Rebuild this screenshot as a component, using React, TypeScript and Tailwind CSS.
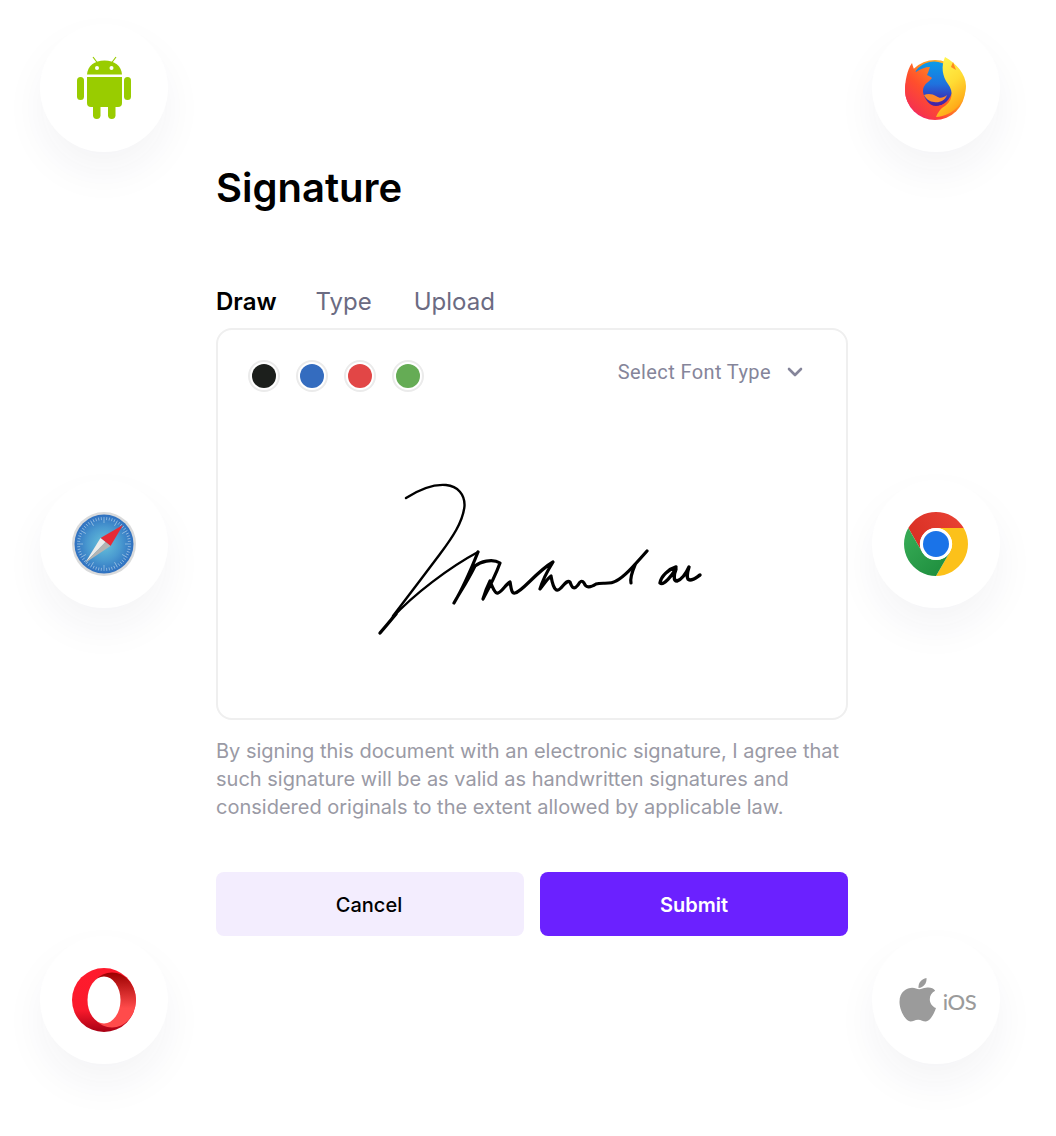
const colors = ["bg-[#1c1f1c]", "bg-[#346cbf]", "bg-[#e24646]", "bg-[#65ac55]"];

function Badge({ children }: { children: React.ReactNode }) {
  return (
    <div className="w-[128px] h-[128px] rounded-full bg-white shadow-[0_20px_40px_rgba(30,40,80,0.05)] flex items-center justify-center">
      {children}
    </div>
  );
}

function Android() {
  return (
    <svg width="128" height="128" viewBox="0 0 128 128" fill="#99cc00">
      <path d="M47 50.5C47.5 42 54.5 36.5 64.5 36.5S81.5 42 82 50.5Z" />
      <path d="M53 33l4.5 6M76 33l-4.5 6" stroke="#99cc00" strokeWidth="1.2" />
      <circle cx="57" cy="44" r="2" fill="#fff" />
      <circle cx="71.5" cy="44" r="2" fill="#fff" />
      <path d="M47 53h35v26a4 4 0 0 1-4 4H51a4 4 0 0 1-4-4Z" />
      <rect x="37" y="53" width="7" height="23" rx="3.5" />
      <rect x="84" y="53" width="7" height="23" rx="3.5" />
      <rect x="53" y="78" width="7.500" height="17" rx="3.700" />
      <rect x="68" y="78" width="7.500" height="17" rx="3.700" />
    </svg>
  );
}

function Firefox() {
  return (
    <svg width="128" height="128" viewBox="0 0 128 128">
      <defs>
        <linearGradient id="ffBase" x1="0.1" y1="0.9" x2="0.9" y2="0.2">
          <stop offset="0" stopColor="#f0226f" />
          <stop offset="0.3" stopColor="#ff3f3a" />
          <stop offset="0.6" stopColor="#ff8a1f" />
          <stop offset="1" stopColor="#ffbf2c" />
        </linearGradient>
        <linearGradient id="ffGlobe" x1="0.5" y1="0" x2="0.5" y2="1">
          <stop offset="0" stopColor="#0a9be8" />
          <stop offset="0.5" stopColor="#1f72de" />
          <stop offset="0.85" stopColor="#3a2fb4" />
          <stop offset="1" stopColor="#4a1d9c" />
        </linearGradient>
        <linearGradient id="ffTail" x1="0.3" y1="0" x2="0.7" y2="1">
          <stop offset="0" stopColor="#fff44f" />
          <stop offset="0.45" stopColor="#ffdc34" />
          <stop offset="1" stopColor="#ff980e" />
        </linearGradient>
        <linearGradient id="ffHead" x1="0.9" y1="0" x2="0.1" y2="1">
          <stop offset="0" stopColor="#ffa01f" />
          <stop offset="0.55" stopColor="#ff4f2c" />
          <stop offset="1" stopColor="#f2285a" />
        </linearGradient>
      </defs>
      <circle cx="63" cy="66" r="30" fill="url(#ffBase)" />
      <circle cx="62" cy="60" r="22.500" fill="url(#ffGlobe)" />
      <path d="M33 66C33 58 35 46 40 39C41 43 42 46 44 48C48 45 53 43 58 43C57 46 56 49 55 51C57 52 59 53 60 54C58 57 54 59 53 61C51 63 51 66 51 68C52 74 57 82 64 82C72 82 78 76 81 66C81 84 70 93 60 93C44 93 33 80 33 66Z" fill="url(#ffHead)" />
      <path d="M52 71C56 69 61 70 64 72C68 75 71 74 75 71C73 77 67 79 62 78C58 78 54 75 52 71Z" fill="#ff8a2a" />
      <path d="M73 33C69 42 70 52 76 60C82 68 81 78 70 84C68 86 66 88 64 93C82 92 94 77 94 62C94 50 84 39 73 33Z" fill="url(#ffTail)" />
      <path d="M81 38L84 46L79 43Z" fill="#ff8a1f" />
    </svg>
  );
}

function Safari() {
  const ticks = Array.from({ length: 60 }, (_, i) => i * 6);
  return (
    <svg width="128" height="128" viewBox="0 0 128 128">
      <defs>
        <radialGradient id="sfBlue">
          <stop offset="0" stopColor="#66c1da" />
          <stop offset="0.55" stopColor="#4a9ad0" />
          <stop offset="1" stopColor="#2f70c0" />
        </radialGradient>
      </defs>
      <circle cx="64" cy="64" r="32" fill="#d9dadb" />
      <circle cx="64" cy="64" r="29.500" fill="url(#sfBlue)" />
      {ticks.map((a) => (
        <line key={a} x1="64" y1="37" x2="64" y2={a % 30 === 0 ? 43 : 40} stroke="#d9ebf6" strokeWidth="0.6" strokeOpacity="0.8" transform={`rotate(${a} 64 64)`} />
      ))}
      <path d="M83 45L70.500 66L60.500 58Z" fill="#e62a35" />
      <path d="M45 83L60.500 58L65.500 62Z" fill="#ececea" />
      <path d="M45 83L65.500 62L70.500 66Z" fill="#b4b4b2" />
    </svg>
  );
}

function Chrome() {
  return (
    <svg width="128" height="128" viewBox="0 0 128 128">
      <defs>
        <linearGradient id="crRed" x1="0" y1="0.5" x2="1" y2="0">
          <stop offset="0" stopColor="#d93025" />
          <stop offset="1" stopColor="#ea4335" />
        </linearGradient>
        <linearGradient id="crGreen" x1="0.8" y1="1" x2="0.1" y2="0.2">
          <stop offset="0" stopColor="#1e8e3e" />
          <stop offset="1" stopColor="#34a853" />
        </linearGradient>
      </defs>
      <path d="M36.3 48A32 32 0 0 1 91.7 48L64 48A16 16 0 0 0 50.1 72Z" fill="url(#crRed)" />
      <path d="M91.7 48A32 32 0 0 1 64 96L77.9 72A16 16 0 0 0 64 48Z" fill="#fcc11a" />
      <path d="M64 96A32 32 0 0 1 36.3 48L50.1 72A16 16 0 0 0 77.9 72Z" fill="url(#crGreen)" />
      <circle cx="64" cy="64" r="16" fill="#fff" />
      <circle cx="64" cy="64" r="13" fill="#1a73e8" />
    </svg>
  );
}

function Opera() {
  return (
    <svg width="128" height="128" viewBox="0 0 128 128">
      <defs>
        <linearGradient id="opBase" x1="0.5" y1="0" x2="0.5" y2="1">
          <stop offset="0" stopColor="#ff1b2d" />
          <stop offset="0.65" stopColor="#fa1a2c" />
          <stop offset="1" stopColor="#a70014" />
        </linearGradient>
        <linearGradient id="opRight" x1="0.5" y1="0" x2="0.5" y2="1">
          <stop offset="0" stopColor="#9c0000" />
          <stop offset="0.65" stopColor="#ff4b4b" />
          <stop offset="1" stopColor="#ff4b4b" />
        </linearGradient>
        <clipPath id="opClip">
          <circle cx="64" cy="64" r="32" />
        </clipPath>
      </defs>
      <circle cx="64" cy="64" r="32" fill="url(#opBase)" />
      <ellipse cx="72" cy="64" rx="24" ry="27.5" fill="url(#opRight)" clipPath="url(#opClip)" />
      <ellipse cx="64" cy="64" rx="16.5" ry="23.5" fill="#fff" />
    </svg>
  );
}

function Ios() {
  return (
    <div className="flex items-center gap-[6px] ml-[3px] text-[#9b9b9b]">
      <svg width="38" height="44" viewBox="0 0 38 44" fill="#9b9b9b">
        <path d="M27 9.800c-2.600 0-4.600 1.500-6.700 1.500-2.300 0-4.300-1.500-7.100-1.500C8 9.800 0.500 13.500 0.500 24c0 8.500 6.300 19.500 11 19.500 2.500 0 4.300-1.800 7.600-1.800 3.300 0 4.700 1.800 7.600 1.800 4 0 8.400-7.500 10.300-13.500-4-1.500-6.200-5-6.200-8.800 0-3.600 2-6.500 5.400-8.400-2-2.700-5.300-3.800-9.200-3z" />
        <path d="M19.500 10C19 5 22.500 0.800 27.500 0c0.500 5.300-3 9.600-8 10z" />
      </svg>
      <span className="font-['Lato',sans-serif] font-medium text-[22px] leading-none mt-[3px] tracking-[-0.5px]">iOS</span>
    </div>
  );
}

function Signature() {
  return (
    <svg width="360" height="180" viewBox="0 0 360 180" fill="none" stroke="#000" strokeLinecap="round" strokeLinejoin="round">
      <path d="M46 28C60 19 74 14 86 15C98 16 105 25 104.500 36C103 52 92 68 80 84C65 104 45 130 33 146" strokeWidth="2.400" />
      <path d="M20 163C26 156 31 150 36 144" strokeWidth="3.400" />
      <path d="M32 148C54 124 90 97 118 82" strokeWidth="2.400" />
      <path d="M118 82C112 97 103 118 94 133C100 122 106 114 115 96C120 92 132 88 140 93C136 104 129 118 123 129C125 122 128 115 130 111C132 116 135 124 138 123C142 122 146 114 150 112C151 116 151 124 155 123C162 122 176 102 193 92C188 100 182 112 180 119C184 114 188 108 191 106C192 112 194 121 198 120C202 119 206 109 210 112C212 118 214 120 218 115C220 111 222 110 224 113C226 118 230 118 236 114C242 112 250 115 256 111C264 107 272 98 287 81" strokeWidth="3.200" />
      <path d="M275 95C272 102 270 108 271 113" strokeWidth="3.200" />
      <path d="M316 97C309 99 301 106 300 113C304 116 312 105 316 99C314 104 313 111 317 111C321 110 326 104 329 97C327 103 326 110 330 110C334 110 337 107 340 105" strokeWidth="3.400" />
    </svg>
  );
}

export default function App() {
  return (
    <div className="w-[1056px] h-[1136px] bg-white overflow-hidden flex pl-[40px] pt-[24px] font-['Inter',sans-serif]">
      <div className="w-[128px] flex flex-col gap-[328px]">
        <Badge><Android /></Badge>
        <Badge><Safari /></Badge>
        <Badge><Opera /></Badge>
      </div>

      <div className="w-[632px] ml-[48px] pt-[140px]">
        <h1 className="text-[40px] leading-[48px] font-semibold text-black">Signature</h1>
        <div className="mt-[74px] flex text-[24px] leading-[32px] text-[#6b6b82]">
          <span className="font-semibold text-black">Draw</span>
          <span className="ml-[39px]">Type</span>
          <span className="ml-[42px]">Upload</span>
        </div>
        <div className="mt-[10px] h-[392px] border-2 border-[#efefef] rounded-[16px] pt-[30px] pl-[30px]">
          <div className="flex items-start justify-between pr-[43px]">
            <div className="flex gap-[16px]">
              {colors.map((c) => (
                <div key={c} className="w-[32px] h-[32px] rounded-full border-2 border-[#ebebeb] flex items-center justify-center">
                  <div className={`w-[24px] h-[24px] rounded-full ${c}`} />
                </div>
              ))}
            </div>
            <div className="flex items-center gap-[16px] text-[20px] leading-[28px] text-[#85859a] font-['Roboto',sans-serif] tracking-[0.4px] -mt-[2px]">
              <span>Select Font Type</span>
              <svg width="16" height="10" viewBox="0 0 16 10" fill="none" stroke="#85859a" strokeWidth="2.6" strokeLinecap="round" strokeLinejoin="round">
                <path d="M2 2l6 6 6-6" />
              </svg>
            </div>
          </div>
          <div className="mt-[78px] ml-[112px]">
            <Signature />
          </div>
        </div>
        <p className="mt-[17px] text-[20px] leading-[28px] text-[#9a9aa5]">
          By signing this document with an electronic signature, I agree that such signature will be as valid as handwritten signatures and considered originals to the extent allowed by applicable law.
        </p>
        <div className="mt-[51px] flex gap-[16px]">
          <button className="w-[308px] h-[64px] pt-[2px] pr-[2px] rounded-[8px] bg-[#f3edfe] text-[20px] font-medium text-black">Cancel</button>
          <button className="w-[308px] h-[64px] pt-[2px] rounded-[8px] bg-[#6b21ff] text-[20px] font-semibold text-white">Submit</button>
        </div>
      </div>

      <div className="w-[128px] ml-[24px] flex flex-col gap-[328px]">
        <Badge><Firefox /></Badge>
        <Badge><Chrome /></Badge>
        <Badge><Ios /></Badge>
      </div>
    </div>
  );
}
